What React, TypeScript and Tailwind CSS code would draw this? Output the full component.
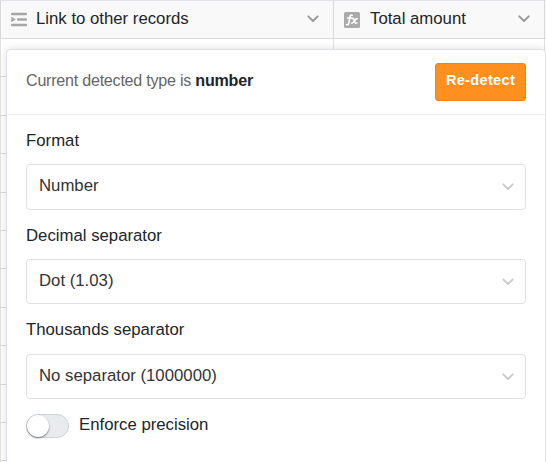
const rows = Array.from({ length: 12 }, (_, i) => i);

function Chevron({ className }: { className: string }) {
  return (
    <svg viewBox="0 0 12 8" className={className} fill="none" stroke="currentColor" strokeWidth="1.9" strokeLinecap="round" strokeLinejoin="round">
      <path d="M1.3 1.3 6 6 10.7 1.3" />
    </svg>
  );
}

function Field({ label, value, className, labelClass, boxClass }: { label: string; value: string; className: string; labelClass: string; boxClass: string }) {
  return (
    <div className={className}>
      <div className={`leading-5 ${labelClass}`}>{label}</div>
      <div className={`flex items-center justify-between rounded border border-[#dee2e6] pl-3 pr-[11px] text-[#333] ${boxClass}`}>
        <span className="-mt-[2px] leading-5">{value}</span>
        <Chevron className="h-2 w-3 text-[#ccc]" />
      </div>
    </div>
  );
}

export default function App() {
  return (
    <div className="relative h-[462px] w-[546px] overflow-hidden bg-white font-['Liberation_Sans',Arial,sans-serif] text-[16.75px] text-[#212529]">
      <div className="flex h-[39px] border-y border-t-[#dfe2e6] border-b-[#d9d9d9] bg-[#f9f9f9]">
        <div className="flex w-[334px] border-x border-[#d9d9d9] pl-[10px] pt-[7px]">
          <svg viewBox="0 0 16 15" className="mt-1 h-[15px] w-4 text-[#a6a6a6]" fill="currentColor">
            <rect x="0" y="0.8" width="16" height="2.5" rx="1" />
            <rect x="6" y="6.2" width="10" height="2.5" rx="1" />
            <rect x="0" y="11.8" width="16" height="2.5" rx="1" />
            <path d="M0.3 4.8 4.8 7.5 0.3 10.2Z" />
          </svg>
          <span className="ml-[9px] mt-px leading-5">Link to other records</span>
          <Chevron className="ml-auto mr-[14px] mt-[7px] h-2 w-3 text-[#999]" />
        </div>
        <div className="flex w-[211px] border-r border-[#d9d9d9] pl-[10px] pt-[7px]">
          <svg viewBox="0 0 16 16" className="mt-1 h-4 w-4">
            <rect width="16" height="16" rx="1.5" fill="#aaa" />
            <path d="M8.2 3.2C6.6 2.5 6.1 3.6 5.8 5.5L4.9 10.7C4.6 12.6 3.9 13.1 2.6 12.5M3.6 6H7.8M8.2 6.6C9.5 5.8 9.8 7 10.3 8.8C10.8 10.8 11.4 11.8 12.8 10.9M13.2 6.6C11.2 6.5 10.3 11.1 7.8 11.1" fill="none" stroke="white" strokeWidth="1.6" strokeLinecap="round" />
          </svg>
          <span className="ml-[10px] mt-px leading-5">Total amount</span>
          <Chevron className="ml-auto mr-[14px] mt-[7px] h-2 w-3 text-[#999]" />
        </div>
      </div>
      <div className="flex flex-col">
        {rows.map((i) => (
          <div key={i} className="flex h-[38.4px] shrink-0 border-b border-[#d9d9d9]">
            <div className="w-[334px] border-x border-[#e2e2e2]" />
            <div className="w-[211px] border-r border-[#e2e2e2]" />
          </div>
        ))}
      </div>

      <div className="absolute left-[6px] top-[49px] h-[430px] w-[540px] rounded border border-[#dee2e6] bg-white shadow-[0_0_10px_rgba(0,0,0,0.12)]">
        <div className="flex h-[65px] items-center justify-between border-b border-[#eceef0] px-[19px]">
          <span className="-mt-[5px] text-[16.1px] leading-5 tracking-[-0.24px] text-[#666]">
            Current detected type is <b className="text-[#212529]">number</b>
          </span>
          <button className="h-[38px] w-[91px] rounded-[3px] border border-[#fd7e14] bg-[#ff8f1f] pb-[3px] text-[14.5px] font-bold tracking-[0.35px] text-white">
            Re-detect
          </button>
        </div>
        <div className="px-[19px]">
          <Field label="Format" value="Number" className="mt-4" labelClass="h-[33px]" boxClass="h-[46px]" />
          <Field label="Decimal separator" value="Dot (1.03)" className="mt-4" labelClass="h-[33px]" boxClass="h-[45px]" />
          <Field label="Thousands separator" value="No separator (1000000)" className="mt-4" labelClass="h-[34px]" boxClass="h-[45px]" />
          <div className="mt-[15px] flex">
            <div className="h-6 w-[43px] rounded-full border border-[#ced4da] bg-[#e9ecef]">
              <div className="h-[22px] w-[22px] rounded-full bg-white shadow-[0_1px_2px_rgba(0,0,0,0.5)]" />
            </div>
            <span className="ml-[10px] mt-px leading-5">Enforce precision</span>
          </div>
        </div>
      </div>
    </div>
  );
}
